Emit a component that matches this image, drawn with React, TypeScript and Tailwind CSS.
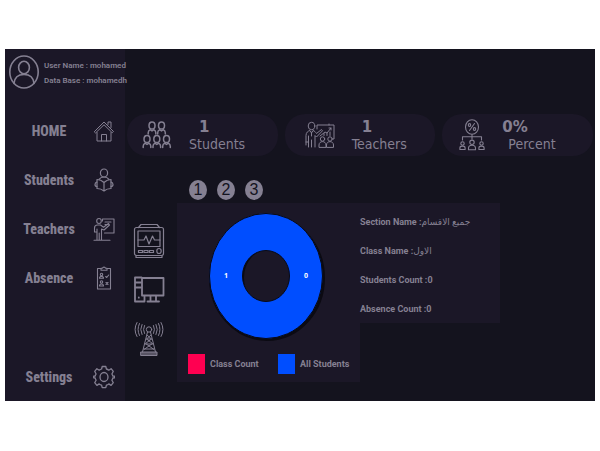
import type { ReactNode } from "react";

const uiFont = "font-['Roboto','Noto_Sans','DejaVu_Sans',sans-serif]";
const narrowFont = "font-['Liberation_Sans_Narrow','Roboto_Condensed','DejaVu_Sans_Condensed',sans-serif]";

type DrawingProps = { w: number; h: number; sw?: number; children: ReactNode };

function Drawing({ w, h, sw = 1, children }: DrawingProps) {
  return (
    <svg
      width={w}
      height={h}
      viewBox={`0 0 ${w} ${h}`}
      fill="none"
      stroke="currentColor"
      strokeWidth={sw}
      strokeLinecap="round"
      strokeLinejoin="round"
      className="shrink-0"
      aria-hidden="true"
    >
      {children}
    </svg>
  );
}

const AvatarIcon = () => (
  <Drawing w={30} h={34} sw={1.6}>
    <ellipse cx="15" cy="17" rx="14.2" ry="16" />
    <ellipse cx="15" cy="12.5" rx="5.4" ry="6.2" />
    <path d="M5 28.500C5.500 22.500 9.500 19.500 15 19.500s9.500 3 10 9" />
  </Drawing>
);

const HomeIcon = () => (
  <Drawing w={22} h={24}>
    <path d="M1.500 12.500 11 3l9.500 9.500-1.300 1.200L11 5.800l-8.200 7.900z" />
    <path d="M4 13.500V22h14v-8.500M8.500 22v-6.500h5V22M15 5.500V3h3v5.500" />
  </Drawing>
);

const ReaderIcon = () => (
  <Drawing w={22} h={24} sw={1.2}>
    <ellipse cx="11" cy="5" rx="3.600" ry="4" />
    <path d="M11 14.500C9 12.500 6.500 11.500 4 11.500v9c2.500 0 5 .8 7 2.500 2-1.700 4.500-2.500 7-2.500v-9c-2.500 0-5 1-7 3zM11 14.500V23" />
    <path d="M6 11.300c1-1.400 2.300-2.300 5-2.300s4 .9 5 2.300M4 14c-1.500.3-2 1.200-2 2.500S3 18.500 4 18.500M18 14c1.500.3 2 1.200 2 2.500s-1 2-2 2" />
  </Drawing>
);

const TeacherIcon = () => (
  <Drawing w={22} h={24} sw={1.1}>
    <ellipse cx="6" cy="4" rx="2.300" ry="2.500" />
    <path d="M9.500 2H21v14h-9.500M9.500 2v2M12 5h6M12 7.500h3M1.500 15V11c0-2 1-3 3-3h3l3 2.200 5-3.700 1 1.500-5.500 5L8.500 12v11M4 12v11M6.200 16v7M1.500 15H4M1 23.300h16" />
  </Drawing>
);

const ClipboardIcon = () => (
  <Drawing w={22} h={24} sw={1.1}>
    <path d="M8 2.500H4.500v20.500h13V2.500H14" />
    <path d="M8 4.200V2.200h1.500C9.800.7 12.200.7 12.500 2.200H14v2z" />
    <circle cx="8.500" cy="8.500" r="1.200" />
    <path d="M6.500 12.300c0-2.600 4-2.600 4 0zM6.500 20c0-2.600 4-2.600 4 0z" />
    <circle cx="8.500" cy="16" r="1.200" />
    <path d="m12.700 10.500 1 1 2-2.500M13 16.500l2 2M15 16.500l-2 2" />
  </Drawing>
);

const GearIcon = () => (
  <Drawing w={22} h={24} sw={1.3}>
    <ellipse cx="11" cy="12" rx="4" ry="4.500" />
    <path d="M9.200 1.500h3.600l.6 2.500q1.500.4 2.400 1.200l2.300-1.500 2.200 2.600-1.400 2.700q.7 1 .9 2l1.700.2v1.600l-1.700.2q-.2 1.200-.9 2.200l1.400 2.500-2.200 2.700-2.300-1.500q-1 .9-2.400 1.300l-.6 2.500H9.200l-.6-2.500q-1.400-.4-2.400-1.300l-2.300 1.500-2.200-2.700 1.400-2.500q-.7-1-.9-2.200L.7 12.800v-1.600l1.500-.2q.2-1 .9-2L1.700 6.300l2.200-2.600 2.300 1.500q1-.8 2.400-1.200z" />
  </Drawing>
);

const Person = ({ x, y }: { x: number; y: number }) => (
  <g transform={`translate(${x} ${y})`}>
    <ellipse cx="0" cy="4" rx="3" ry="3.600" />
    <path d="M-3.800 12.500v-1.300c0-1.600.7-2.500 2-3L0 9.500l1.800-1.300c1.300.5 2 1.400 2 3v1.300" />
  </g>
);

const StudentsIcon = () => (
  <Drawing w={30} h={28} sw={1.500}>
    <Person x={10} y={0.5} />
    <Person x={19.500} y={0.5} />
    <Person x={5} y={14} />
    <Person x={14.800} y={14} />
    <Person x={24.500} y={14} />
  </Drawing>
);

const TrainingIcon = () => (
  <Drawing w={30} h={28}>
    <ellipse cx="6.500" cy="5" rx="3.300" ry="3.700" />
    <path d="M1 24v-9.500c0-3 2-4.500 4-5l1.500 2.500 1.500-2.500c1.500.4 2.500 1.500 3.500 3l5-4 1 1.300-6 6.200-1.500-1.500V26M3.500 15v11M6.500 19v7M6.500 12v3M1 21h2.500" />
    <path d="M12 8V4h17v14h-1M24 4V3M15 15l5-4 2 1 4-5M24 7h2v2M19 14.500v-2M22 14.500V12M25 14.500V11" />
    <circle cx="17.500" cy="18" r="2.200" />
    <circle cx="25" cy="18" r="2.200" />
    <path d="M14 26v-2c0-4.500 7-4.500 7 0v2zM21.500 26v-2c0-4.500 7-4.500 7 0v2z" />
  </Drawing>
);

const MiniPerson = ({ x, y }: { x: number; y: number }) => (
  <g transform={`translate(${x} ${y})`}>
    <circle cx="0" cy="2" r="1.700" />
    <path d="M-2.600 8V6.500C-2.600 4 2.600 4 2.600 6.500V8z" />
  </g>
);

const PercentIcon = () => (
  <Drawing w={28} h={32} sw={1.1}>
    <ellipse cx="14" cy="8" rx="6.500" ry="7.200" />
    <path d="m16.500 4.500-5 7" />
    <ellipse cx="11.500" cy="6" rx="1.200" ry="1.400" />
    <ellipse cx="16.500" cy="10" rx="1.200" ry="1.400" />
    <path d="M14 15.500V20M4.500 21v-3.300h19V21" />
    <MiniPerson x={4.500} y={22.500} />
    <MiniPerson x={23.500} y={22.500} />
    <circle cx="14" cy="23.300" r="2.200" />
    <path d="M10.500 30.800v-1.500c0-4 7-4 7 0v1.500z" />
  </Drawing>
);

const MonitorIcon = () => (
  <Drawing w={32} h={36} sw={1.2}>
    <rect x="1.500" y="4.500" width="29" height="28" rx="2" />
    <path d="M5.500 4.500 8 1.500h16l2.500 3M3 32.500v2h26v-2" />
    <rect x="5" y="8" width="22" height="15.500" />
    <path d="M5 17h6l2-4 3 8 3.500-8 2 4H27" />
    <path d="M5.500 27.500h4v2h-4zM11 27.500h4v2h-4zM16.500 27.500h4v2h-4z" />
    <ellipse cx="26" cy="28" rx="2.200" ry="2.500" />
  </Drawing>
);

const ComputerIcon = () => (
  <Drawing w={32} h={28} sw={1.800}>
    <path d="M8.500 1.500H2v24h9.500v-5M2 6.500h6M2 11.500h6M5.800 21.500v.2" />
    <rect x="9" y="2" width="21.500" height="17.500" />
    <path d="M17.500 20v5M23 20v5M14.500 25.500h11.500" />
  </Drawing>
);

const TowerIcon = () => (
  <Drawing w={32} h={36}>
    <circle cx="16" cy="8.500" r="2.700" />
    <path d="M14.500 11 9.500 31M17.500 11l5 20M14 14l4.500 4-6 4.500 8.500 6M18 14l-4.500 4 6 4.500-8.500 6M13.500 18h5M12 23h8M11 28h10" />
    <rect x="8" y="31" width="16" height="3.500" fill="currentColor" fillOpacity=".6" />
    <path d="M11.500 4.500q-2 4 0 8M9 3.500q-2.600 5 0 10M6.500 2.500q-3 6 0 12M4 1.500q-4 7 0 14M20.500 4.500q2 4 0 8M23 3.500q2.600 5 0 10M25.500 2.500q3 6 0 12M28 1.500q4 7 0 14" />
  </Drawing>
);

const navItems = [
  { label: "HOME", icon: <HomeIcon /> },
  { label: "Students", icon: <ReaderIcon /> },
  { label: "Teachers", icon: <TeacherIcon /> },
  { label: "Absence", icon: <ClipboardIcon /> },
];

function NavButton({ label, icon }: { label: string; icon: ReactNode }) {
  return (
    <button type="button" className="flex h-[49px] w-full shrink-0 items-center">
      <span className={`w-[88px] text-center text-[14px] leading-5 font-extrabold ${narrowFont}`}>{label}</span>
      {icon}
    </button>
  );
}

type StatProps = { icon: ReactNode; value: string; label: string; pad: string; wide?: boolean };

function Stat({ icon, value, label, pad, wide }: StatProps) {
  return (
    <div className={`flex h-[42px] items-center rounded-[20px] bg-[#1b1727] ${pad}`}>
      <div className="flex w-[32px] justify-center">{icon}</div>
      <dl className="ml-[14px] flex flex-col-reverse">
        <dt className={`text-[14px] leading-4 ${wide ? "pl-[6px]" : "pl-[2px]"} font-['DejaVu_Sans_Condensed','DejaVu_Sans',sans-serif]`}>{label}</dt>
        <dd className={`text-[15px] leading-[18px] font-bold ${wide ? "" : "pl-3"} font-['DejaVu_Sans',sans-serif]`}>{value}</dd>
      </dl>
    </div>
  );
}

function Donut() {
  return (
    <svg width="120" height="130" viewBox="0 0 120 130" role="img" aria-label="Students by class">
      <g fill="none">
        <ellipse cx="60" cy="66" rx="40.500" ry="45.500" stroke="#0b0a12" strokeWidth="35" />
        <path
          fill="#004eff"
          fillRule="evenodd"
          stroke="#080a16"
          d="M59 1.500a56.500 62.500 0 1 1 0 125a56.500 62.500 0 1 1 0-125zM59 38.500a23.500 25.500 0 1 0 0 51a23.500 25.500 0 1 0 0-51z"
        />
      </g>
      <g fill="#fff" textAnchor="middle" className="font-['Open_Sans',sans-serif] text-[7px] font-bold">
        <text x="19" y="66">1</text>
        <text x="99" y="66">0</text>
      </g>
    </svg>
  );
}

const details = [
  ["Section Name :", "جميع الاقسام"],
  ["Class Name :", "الاول"],
  ["Students Count :", "0"],
  ["Absence Count :", "0"],
];

export default function App() {
  return (
    <div className="bg-white px-[5px] py-[49px]">
      <div className={`flex min-h-[352px] bg-[#14131e] text-[#858092] ${uiFont}`}>
        <aside className="flex w-[120px] shrink-0 flex-col bg-[#1b1727]">
          <div className="flex h-[57px] shrink-0 items-start pt-[6px] pl-1">
            <AvatarIcon />
            <div className="pt-[3px] pl-[5px] text-[8px] leading-[15px] font-semibold whitespace-nowrap">
              <p>User Name : mohamed</p>
              <p>Data Base : mohamedh</p>
            </div>
          </div>
          <nav className="flex flex-1 flex-col">
            {navItems.map((item) => (
              <NavButton key={item.label} {...item} />
            ))}
            <div className="mt-auto">
              <NavButton label="Settings" icon={<GearIcon />} />
            </div>
          </nav>
        </aside>

        <main className="min-w-0 flex-1 pt-[65px]">
          <section className="grid grid-cols-3 gap-[7px] px-[2px]">
            <Stat icon={<StudentsIcon />} value="1" label="Students" pad="pl-[14px]" />
            <Stat icon={<TrainingIcon />} value="1" label="Teachers" pad="pl-[19px]" />
            <Stat icon={<PercentIcon />} value="0%" label="Percent" pad="pl-[14px]" wide />
          </section>

          <div className="flex pt-6">
            <div className="flex w-[52px] shrink-0 flex-col items-center gap-[17px] pt-[43px] pr-1">
              <button type="button" aria-label="Monitor"><MonitorIcon /></button>
              <button type="button" aria-label="Computer"><ComputerIcon /></button>
              <button type="button" aria-label="Broadcast"><TowerIcon /></button>
            </div>
            <div>
              <div className="flex gap-[10px] pb-[3px] pl-3">
                {["1", "2", "3"].map((n) => (
                  <button
                    key={n}
                    type="button"
                    className="h-5 w-[18px] rounded-[50%] bg-[#858092] text-center font-['Liberation_Sans',sans-serif] text-[16px] leading-5 text-[#14131e]"
                  >
                    {n}
                  </button>
                ))}
              </div>
              <div className="flex items-start">
                <section className="w-[183px] bg-[#1b1727] pt-[9px] pb-2 pl-[11px]">
                  <div className="pl-[19px]"><Donut /></div>
                  <ul className="grid grid-cols-[90px_auto] pt-3 text-[9px] leading-5 font-bold whitespace-nowrap">
                    <li className="flex gap-[5px]">
                      <span className="h-5 w-[17px] bg-[#ff0051]" />
                      Class Count
                    </li>
                    <li className="flex gap-[5px]">
                      <span className="h-5 w-[17px] bg-[#004eff]" />
                      All Students
                    </li>
                  </ul>
                </section>
                <section className="flex h-[120px] w-[140px] flex-col gap-[13px] bg-[#1b1727] pt-[11px] text-[9px] leading-4 font-bold whitespace-nowrap">
                  {details.map(([name, value]) => (
                    <p key={name}>
                      {name}
                      {value === "0" ? value : <span lang="ar" className="font-normal">{value}</span>}
                    </p>
                  ))}
                </section>
              </div>
            </div>
          </div>
        </main>
      </div>
    </div>
  );
}
